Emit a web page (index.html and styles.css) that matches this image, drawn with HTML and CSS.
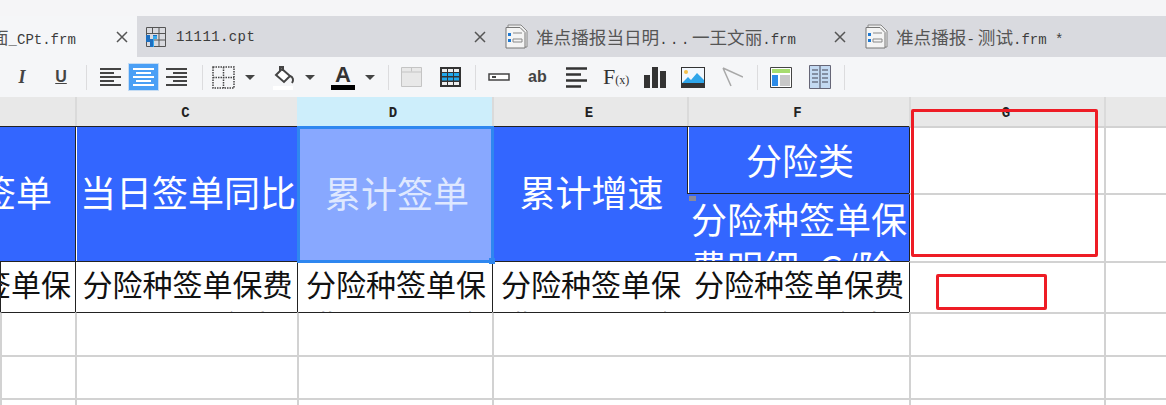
FILE: index.html
```html
<!DOCTYPE html>
<html lang="zh-CN">
<head>
    <meta charset="UTF-8">
    <title>FineReport</title>
    <link rel="stylesheet" href="styles.css">
</head>
<body>
    <div class="top-strip"></div>

    <div class="tabs">
        <div class="tab tab-active tab-first">
            <span class="tab-name name-clipped"><span class="cjk">面</span>_CPt.frm</span>
            <svg class="close" width="12" height="12" viewBox="0 0 12 12"><path d="M1 1l10 10M11 1L1 11" stroke="#555" stroke-width="1.5"/></svg>
        </div>
        <div class="tab tab-second">
            <svg class="tab-icon" width="20" height="20" viewBox="0 0 20 20">
                <path d="M.5.5h19v19H.5zM.5 6.500h19M.5 13h19M6.500.5v6M13 .5v19" fill="none" stroke="#555"/>
                <path d="M0 8h4v4h3V8h4v4H8v8H4v-5H0z" fill="#1e6fc0"/>
                <path d="M7 9h4v3H8v8H7z" fill="#35a9ee"/>
            </svg>
            <span class="tab-name spaced">11111.cpt</span>
            <svg class="close" width="12" height="12" viewBox="0 0 12 12"><path d="M1 1l10 10M11 1L1 11" stroke="#555" stroke-width="1.5"/></svg>
        </div>
        <div class="tab tab-third">
            <svg class="tab-icon" width="24" height="25" viewBox="0 0 24 25">
                <path d="M3 3.500V1h13l6 6v16H6" fill="#eee" stroke="#888"/>
                <path d="M1 3.500h14l5 5V24H1z" fill="#f4f4f4" stroke="#777"/>
                <path d="M3 9h3v3H3zM3 15h3v3H3z" fill="#1e78d2"/>
                <path d="M8 9h9M8 15h9v3H8z" fill="none" stroke="#888"/>
            </svg>
            <span class="tab-name"><span class="cjk">准点播报当日明</span><span class="dots">...</span><span class="cjk">一王文丽</span>.frm</span>
            <svg class="close" width="12" height="12" viewBox="0 0 12 12"><path d="M1 1l10 10M11 1L1 11" stroke="#555" stroke-width="1.5"/></svg>
        </div>
        <div class="tab tab-fourth">
            <svg class="tab-icon" width="24" height="25" viewBox="0 0 24 25">
                <path d="M3 3.500V1h13l6 6v16H6" fill="#eee" stroke="#888"/>
                <path d="M1 3.500h14l5 5V24H1z" fill="#f4f4f4" stroke="#777"/>
                <path d="M3 9h3v3H3zM3 15h3v3H3z" fill="#1e78d2"/>
                <path d="M8 9h9M8 15h9v3H8z" fill="none" stroke="#888"/>
            </svg>
            <span class="tab-name"><span class="cjk">准点播报</span><span class="dash">-</span><span class="cjk">测试</span>.frm *</span>
        </div>
    </div>

    <div class="toolbar">
        <span class="tool-text italic">I</span>
        <span class="tool-text underline ml-27">U</span>
        <span class="sep ml-18"></span>
        <svg class="ml-13" width="21" height="19" viewBox="0 0 21 19"><path d="M0 1h21M0 5h14M0 9h21M0 13h14M0 17h21" stroke="#444" stroke-width="2"/></svg>
        <span class="tool-active ml-7">
            <svg width="21" height="19" viewBox="0 0 21 19"><path d="M0 1h21M3 5h15M0 9h21M3 13h15M0 17h21" stroke="#fff" stroke-width="2"/></svg>
        </span>
        <svg class="ml-7" width="21" height="19" viewBox="0 0 21 19"><path d="M0 1h21M7 5h14M0 9h21M7 13h14M0 17h21" stroke="#444" stroke-width="2"/></svg>
        <span class="sep ml-15"></span>
        <svg class="ml-9" width="23" height="23" viewBox="0 0 23 23"><path d="M1 1h21v21H1zM11.500 1v21M1 11.500h21" fill="none" stroke="#444" stroke-width="1.500" stroke-dasharray="1.500 1"/></svg>
        <span class="caret ml-10"></span>
        <svg class="ml-18" width="22" height="25" viewBox="0 0 22 25">
            <path d="M9 4l8 7-6 6-8-7z" fill="#fff" stroke="#444" stroke-width="2"/>
            <path d="M7 6V2h3v4M17 11c3 1 4 4 2 7" fill="none" stroke="#444" stroke-width="2"/>
            <path d="M0 21h20v4H0z" fill="#fff"/>
        </svg>
        <span class="caret ml-10"></span>
        <span class="font-color ml-16">A</span>
        <span class="caret ml-10"></span>
        <span class="sep ml-13"></span>
        <svg class="ml-12" width="21" height="20" viewBox="0 0 21 20"><path d="M.5.5h20v19H.5zM.5 5h20M10.500.5v4" fill="#e8e8e8" stroke="#c4c4c4"/></svg>
        <svg class="ml-18" width="21" height="20" viewBox="0 0 21 20"><path d="M0 0h21v20H0z" fill="#333"/><path d="M2 2h5v3H2zM8 2h5v3H8zM14 2h5v3h-5zM2 15h5v3H2zM8 15h5v3H8zM14 15h5v3h-5z" fill="#eee"/><path d="M2 6h5v3H2zM8 6h5v3H8zM14 6h5v3h-5zM2 10.500h5v3H2zM8 10.500h5v3H8zM14 10.500h5v3h-5z" fill="#1fa8ec"/></svg>
        <span class="sep ml-14"></span>
        <svg class="ml-12" width="22" height="8" viewBox="0 0 22 8"><path d="M1 1h20v6H1z" fill="#fff" stroke="#444" stroke-width="1.500"/><path d="M4 3h4v2H4z" fill="#444"/></svg>
        <span class="tool-ab ml-18">ab</span>
        <svg class="ml-19" width="21" height="21" viewBox="0 0 21 21"><path d="M0 1.500h21M0 7.500h15M0 13.500h21M0 19.500h15" stroke="#333" stroke-width="2.500"/></svg>
        <span class="tool-fx ml-16">F<small>(x)</small></span>
        <svg class="ml-16" width="22" height="21" viewBox="0 0 22 21"><path d="M0 8h6v13H0zM8 0h6v21H8zM16 4h6v17h-6z" fill="#333"/></svg>
        <svg class="ml-15" width="24" height="21" viewBox="0 0 24 21"><path d="M0 0h24v21H0z" fill="#333"/><path d="M1 1h22v15H1z" fill="#f2f8fe"/><circle cx="5" cy="5" r="2" fill="#f5c04a"/><path d="M1 16l6-6 3 3 6-7 7 7v3z" fill="#2fa6ea"/></svg>
        <svg class="ml-17" width="21" height="20" viewBox="0 0 21 20"><path d="M1 1l20 9M1 1l8 18" fill="none" stroke="#a8a8a8" stroke-width="1.500"/></svg>
        <span class="sep ml-14"></span>
        <svg class="ml-12" width="22" height="21" viewBox="0 0 22 21"><path d="M.5.5h21v20H.5z" fill="#fff" stroke="#444"/><path d="M2 2h18v4H2z" fill="#a6dc6e"/><path d="M2 8h6v11H2z" fill="#2c8be8"/><path d="M10 8h10v11H10z" fill="#c8c8c8"/></svg>
        <svg class="ml-17" width="22" height="24" viewBox="0 0 22 24"><path d="M.5.5h21v23H.5z" fill="#c4daf2" stroke="#667"/><path d="M11 1v22M3 5h6M3 9h6M3 13h6M3 17h6M13 5h6M13 9h6M13 13h6M13 17h6" stroke="#445" fill="none"/></svg>
        <span class="sep ml-13"></span>
    </div>

    <div class="sheet">
        <div class="col-head">&nbsp;</div>
        <div class="col-head">C</div>
        <div class="col-head col-head-selected">D</div>
        <div class="col-head">E</div>
        <div class="col-head">F</div>
        <div class="col-head">G</div>
        <div class="col-head">&nbsp;</div>

        <div class="cell head-cell span-two align-end"><span>当日签单</span></div>
        <div class="cell head-cell span-two"><span>当日签单同比</span></div>
        <div class="cell head-cell span-two selected"><span>累计签单</span><i class="handle"></i></div>
        <div class="cell head-cell span-two"><span>累计增速</span></div>
        <div class="cell head-cell head-short"><span>分险类</span></div>
        <div class="cell dark-left"></div>
        <div class="cell"></div>

        <div class="cell head-cell wrap-cell"><i class="marker"></i>分险种签单保费明细_G/险种</div>
        <div class="cell dark-left"></div>
        <div class="cell"></div>

        <div class="cell data-cell data-clipped"><span>分险种签单保</span></div>
        <div class="cell data-cell">分险种签单保费明细_G/险种</div>
        <div class="cell data-cell">分险种签单保费明细_G/险种</div>
        <div class="cell data-cell">分险种签单保费明细_G/险种</div>
        <div class="cell data-cell">分险种签单保费明细_G/险种</div>
        <div class="cell dark-left"></div>
        <div class="cell"></div>

        <div class="cell dark-top"></div><div class="cell dark-top"></div><div class="cell dark-top"></div><div class="cell dark-top"></div><div class="cell dark-top"></div><div class="cell"></div><div class="cell"></div>
        <div class="cell"></div><div class="cell"></div><div class="cell"></div><div class="cell"></div><div class="cell"></div><div class="cell"></div><div class="cell"></div>
        <div class="cell"></div><div class="cell"></div><div class="cell"></div><div class="cell"></div><div class="cell"></div><div class="cell"></div><div class="cell"></div>

        <!-- red marks drawn on top of the screenshot -->
        <div class="mark mark-large"></div>
        <div class="mark mark-small"></div>
    </div>
</body>
</html>
```

FILE: styles.css
```css
html, body {
    margin: 0;
    height: 405px;
    overflow: hidden;
    background: #fff;
}
body {
    font-family: "Liberation Mono", "Noto Sans CJK SC", monospace;
}
.top-strip {
    height: 16px;
    background: #f5f5f7;
}

/* tabs */
.tabs {
    display: flex;
    height: 41px;
    background: #d9dadf;
    color: #3c3c3c;
    font-size: 14px;
    overflow: hidden;
}
.tab {
    display: flex;
    align-items: center;
    flex: none;
    box-sizing: border-box;
    overflow: hidden;
}
.tab-active {
    background: #f5f6f8;
}
.tab-first {
    width: 137px;
}
.tab-second {
    width: 358px;
    padding-left: 9px;
}
.tab-third {
    width: 360px;
    padding-left: 10px;
}
.tab-fourth {
    width: 311px;
    padding-left: 10px;
}
.tab-icon {
    flex: none;
    margin-right: 7px;
}
.tab-second .tab-icon {
    margin-right: 10px;
}
.tab-name {
    white-space: nowrap;
}
.name-clipped {
    margin-left: -9px;
}
.spaced {
    letter-spacing: .4px;
}
.cjk {
    font-family: "Noto Sans CJK SC", sans-serif;
    font-size: 17.6px;
    color: #555;
}
.dots {
    letter-spacing: 2.5px;
}
.dash {
    letter-spacing: 3px;
}
.close {
    flex: none;
    margin-left: auto;
    margin-right: 9px;
}

/* toolbar */
.toolbar {
    display: flex;
    align-items: center;
    height: 40px;
    padding-left: 17px;
    background: #f5f6f8;
}
.toolbar > * {
    flex: none;
}
.sep {
    width: 1px;
    height: 25px;
    background: #dcdcde;
}
.caret {
    width: 0;
    height: 0;
    border-left: 5px solid transparent;
    border-right: 5px solid transparent;
    border-top: 5px solid #444;
}
.tool-text {
    width: 14px;
    font-family: "Liberation Serif", serif;
    font-weight: bold;
    font-size: 18px;
    color: #444;
    text-align: center;
}
.italic {
    width: 10px;
    font-style: italic;
}
.underline {
    font-family: "Liberation Sans", sans-serif;
    font-size: 16px;
    text-decoration: underline;
}
.tool-active {
    display: flex;
    align-items: center;
    justify-content: center;
    box-sizing: border-box;
    width: 31px;
    height: 28px;
    background: #4a9ff5;
    border: 1px solid #c5dcf3;
}
.font-color {
    box-sizing: border-box;
    width: 24px;
    height: 25px;
    font-family: "Liberation Sans", sans-serif;
    font-weight: bold;
    font-size: 22px;
    line-height: 20px;
    color: #333;
    text-align: center;
    border-bottom: 5px solid #000;
}
.tool-ab {
    width: 19px;
    font-family: "Liberation Sans", sans-serif;
    font-weight: bold;
    font-size: 16px;
    color: #444;
}
.tool-fx {
    width: 25px;
    font-family: "Liberation Serif", serif;
    font-size: 22px;
    color: #333;
    white-space: nowrap;
}
.tool-fx small {
    font-size: 12px;
}
.ml-7 { margin-left: 7px; }
.ml-9 { margin-left: 9px; }
.ml-10 { margin-left: 10px; }
.ml-12 { margin-left: 12px; }
.ml-13 { margin-left: 13px; }
.ml-14 { margin-left: 14px; }
.ml-15 { margin-left: 15px; }
.ml-16 { margin-left: 16px; }
.ml-17 { margin-left: 17px; }
.ml-18 { margin-left: 18px; }
.ml-19 { margin-left: 19px; }
.ml-27 { margin-left: 27px; }

/* sheet */
.sheet {
    position: relative;
    display: grid;
    grid-template-columns: 75px 222px 195px 195px 222px 195px 62px;
    grid-template-rows: 29px 67px 68px 51px 43px 43px 7px;
    font-family: "Noto Sans CJK SC", sans-serif;
    overflow: hidden;
}
.col-head {
    box-sizing: border-box;
    padding: 9px 3px 0 0;
    background: #e8e8e8;
    border-left: 2px solid #dadada;
    font-family: "Liberation Mono", monospace;
    font-weight: bold;
    font-size: 14px;
    line-height: 15px;
    color: #222;
    text-align: center;
}
.col-head:first-child {
    border-left: 0;
}
.col-head-selected {
    background: #cdeefb;
    border-left: 0;
}
.cell {
    position: relative;
    box-sizing: border-box;
    border-left: 2px solid #d2d2d2;
    border-top: 2px solid #d2d2d2;
    overflow: hidden;
    min-width: 0;
}
.cell:nth-of-type(7n+1) {
    border-left: 0;
}
.head-cell {
    display: flex;
    align-items: center;
    justify-content: center;
    padding: 0 0 6px 3px;
    background: #3366ff;
    border-width: 1px;
    border-color: #222;
    box-shadow: inset 1px 0 0 #fff;
    color: #fff;
    font-size: 36px;
    white-space: nowrap;
}
.head-cell span {
    line-height: 44px;
    flex: none;
}
.head-short {
    padding-bottom: 2px;
}
.span-two {
    grid-row: span 2;
}
.align-end {
    justify-content: flex-end;
    padding: 0 23px 6px 0;
    box-shadow: none;
}
.selected {
    overflow: visible;
    z-index: 1;
    margin-bottom: -2px;
    margin-right: -2px;
    background: #88a8ff;
    border: 3px solid #2f87f0;
    box-shadow: none;
    color: #dfe8ff;
}
.handle {
    position: absolute;
    right: -4px;
    bottom: -4px;
    width: 6px;
    height: 6px;
    background: #2f87f0;
}
.wrap-cell {
    display: block;
    padding: 0 0 0 4px;
    font-size: 36px;
    line-height: 48px;
    text-align: left;
    white-space: normal;
    word-break: break-all;
    box-shadow: none;
}
.marker {
    position: absolute;
    left: 2px;
    top: 2px;
    width: 7px;
    height: 5px;
    background: #8a8a9a;
}
.data-cell {
    padding: 1px 0 0 2px;
    border-width: 1px;
    border-color: #222;
    font-size: 30px;
    line-height: 41px;
    color: #111;
    text-align: center;
    word-break: break-all;
}
.data-clipped {
    display: flex;
    justify-content: flex-end;
    padding-right: 4px;
    white-space: nowrap;
}
.data-clipped span {
    flex: none;
}
.dark-left {
    border-left: 1px solid #222;
}
.dark-top {
    border-top: 1px solid #222;
}
.mark {
    position: absolute;
    box-sizing: border-box;
    border: 3px solid #ee1c25;
    border-radius: 2px;
    z-index: 2;
}
.mark-large {
    left: 911px;
    top: 12px;
    width: 187px;
    height: 148px;
}
.mark-small {
    left: 936px;
    top: 177px;
    width: 111px;
    height: 36px;
}
```
